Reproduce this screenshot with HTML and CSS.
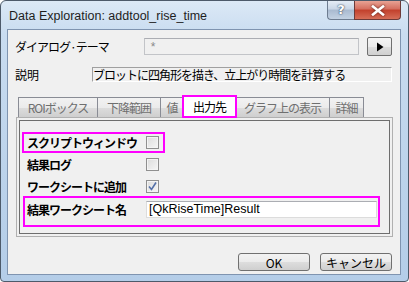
FILE: index.html
```html
<!DOCTYPE html>
<html lang="ja">
<head>
    <meta charset="UTF-8">
    <title>Data Exploration: addtool_rise_time</title>
    <link rel="stylesheet" href="styles.css">
</head>
<body>
    <!-- Janela do diálogo -->
    <div class="window">
        <div class="titlebar">
            <span class="title">Data Exploration: addtool_rise_time</span>
            <div class="caption-buttons">
                <span class="cap-help">?</span>
                <span class="cap-close">
                    <svg width="14" height="11" viewBox="0 0 14 11"><path d="M2 1.5 L12 9.5 M12 1.5 L2 9.5" stroke="#fff" stroke-width="2.6" stroke-linecap="square"/></svg>
                </span>
            </div>
        </div>

        <div class="client">
            <!-- Tema -->
            <div class="theme-row">
                <span class="row-label">ダイアログ·テーマ</span>
                <div class="theme-field">*</div>
                <button class="arrow-btn">
                    <svg width="8" height="10" viewBox="0 0 8 10"><path d="M1 0.5 L7.5 5 L1 9.5 Z" fill="#000"/></svg>
                </button>
            </div>

            <!-- Descrição -->
            <div class="desc-row">
                <span class="desc-label">説明</span>
                <div class="desc-field">ブロットに四角形を描き、立上がり時間を計算する</div>
            </div>

            <!-- Abas -->
            <div class="tabs">
                <div class="tab">ROIボックス</div>
                <div class="tab">下降範囲</div>
                <div class="tab">値</div>
                <div class="tab active">出力先</div>
                <div class="tab">グラフ上の表示</div>
                <div class="tab">詳細</div>
            </div>

            <div class="panel">
                <div class="panel-inner">
                    <div class="opt-row boxed">
                        <span class="opt-label">スクリプトウィンドウ</span>
                        <span class="check"></span>
                    </div>
                    <div class="opt-row">
                        <span class="opt-label">結果ログ</span>
                        <span class="check"></span>
                    </div>
                    <div class="opt-row">
                        <span class="opt-label">ワークシートに追加</span>
                        <span class="check checked">
                            <svg width="11" height="11" viewBox="0 0 11 11"><path d="M2 5.5 L4.5 8.5 L9 1.5" fill="none" stroke="#5470a8" stroke-width="1.6"/></svg>
                        </span>
                    </div>
                    <div class="sheet-row">
                        <span class="opt-label">結果ワークシート名</span>
                        <div class="sheet-input">[QkRiseTime]Result</div>
                    </div>
                </div>
            </div>

            <!-- Botões -->
            <div class="footer">
                <button class="dlg-btn">OK</button>
                <button class="dlg-btn">キャンセル</button>
            </div>
        </div>
    </div>
</body>
</html>
```

FILE: styles.css
```css
/* Reset */
* {
    margin: 0;
    padding: 0;
    box-sizing: border-box;
}

body {
    width: 409px;
    height: 282px;
    overflow: hidden;
    background: #ffffff;
    font-family: "Noto Sans CJK JP", "Liberation Sans", sans-serif;
    font-size: 12px;
    color: #000;
}

/* Moldura da janela */
.window {
    width: 409px;
    height: 282px;
    border: 1px solid #4d5a6a;
    border-radius: 6px 6px 4px 4px;
    background: linear-gradient(180deg, #dce9f6 0%, #c9dcf0 12%, #bcd3eb 60%, #b4cde8 100%);
    padding: 0 7px 6px 6px;
    display: flex;
    flex-direction: column;
}

.titlebar {
    height: 28px;
    display: flex;
    justify-content: space-between;
    align-items: flex-start;
}

.title {
    font-family: "Liberation Sans", sans-serif;
    font-size: 12.5px;
    color: #1e1e1e;
    margin: 8px 0 0 2px;
}

.caption-buttons {
    display: flex;
    height: 19px;
}

.cap-help {
    width: 27px;
    height: 19px;
    border: 1px solid #6d7c90;
    border-top: none;
    border-right: none;
    border-radius: 0 0 0 4px;
    background: linear-gradient(180deg, #e4ecf5 0%, #c9d6e6 45%, #a9bad0 50%, #c3d2e3 100%);
    color: #fff;
    font-family: "DejaVu Sans", sans-serif;
    font-weight: bold;
    font-size: 13px;
    text-align: center;
    line-height: 18px;
    text-shadow: 0 0 2px #35475e, 0 0 1px #35475e;
}

.cap-close {
    width: 47px;
    height: 19px;
    border: 1px solid #6d3a38;
    border-top: none;
    border-radius: 0 0 4px 0;
    background: linear-gradient(180deg, #e8a294 0%, #d46e5e 45%, #c2402c 50%, #d66e58 100%);
    display: flex;
    justify-content: center;
    align-items: center;
}

.cap-close svg {
    filter: drop-shadow(0 0 1px #5a1a12);
}

/* Área cliente */
.client {
    width: 394px;
    height: 246px;
    border: 1px solid #7f94b0;
    background: #f0f0f0;
    padding: 0 8px 0 0;
}

.theme-row {
    display: flex;
    align-items: center;
    height: 19px;
    margin-top: 7px;
    padding-left: 7px;
}

.row-label {
    width: 129px;
    letter-spacing: -1px;
}

.theme-field {
    width: 216px;
    height: 17px;
    border: 1px solid #c2c4c8;
    border-top-color: #abadb3;
    background: #f0f0f0;
    color: #8a8a8a;
    font-family: "Liberation Sans", sans-serif;
    padding-left: 6px;
    line-height: 16px;
}

.arrow-btn {
    width: 25px;
    height: 19px;
    margin-left: 8px;
    border: 1px solid #707070;
    border-radius: 2px;
    background: linear-gradient(180deg, #f4f4f4 0%, #ebebeb 50%, #dddddd 51%, #d0d0d0 100%);
    display: flex;
    justify-content: center;
    align-items: center;
}

.desc-row {
    display: flex;
    align-items: center;
    height: 14px;
    margin-top: 11px;
    padding-left: 7px;
}

.desc-label {
    width: 77px;
}

.desc-field {
    flex: 1;
    height: 15px;
    border: 1px solid #fff;
    border-top-color: #a0a0a0;
    border-left-color: #a0a0a0;
    line-height: 13px;
    letter-spacing: -1px;
    white-space: nowrap;
}

/* Abas */
.tabs {
    display: flex;
    align-items: flex-end;
    height: 21px;
    margin-top: 15px;
    padding-left: 10px;
}

.tab {
    height: 20px;
    border: 1px solid #898c95;
    border-bottom: none;
    margin-right: -1px;
    background: linear-gradient(180deg, #f2f2f2 0%, #ebebeb 50%, #dddddd 51%, #cfcfcf 100%);
    color: #6f6f6f;
    font-size: 12px;
    letter-spacing: -1px;
    text-align: center;
    line-height: 19px;
}

.tab:nth-child(1) { width: 80px; }
.tab:nth-child(2) { width: 64px; }
.tab:nth-child(3) { width: 24px; }
.tab:nth-child(4) { width: 53px; }
.tab:nth-child(5) { width: 95px; }
.tab:nth-child(6) { width: 35px; }

.tab.active {
    height: 21px;
    background: #ffffff;
    color: #000;
    outline: 2px solid #ff00ff;
    outline-offset: -1px;
    position: relative;
    z-index: 1;
}

/* Painel da aba */
.panel {
    margin-left: 8px;
    width: 377px;
    height: 120px;
    border: 1px solid #b0b0b0;
    padding: 2px;
}

.panel-inner {
    height: 114px;
    border: 1px solid #6e6e6e;
    padding-top: 13px;
}

.opt-row {
    display: flex;
    align-items: center;
    height: 17px;
    width: 139px;
    margin: 5px 0 0 4px;
    padding-left: 3px;
}

.opt-row.boxed {
    margin-top: 0;
    outline: 2px solid #ff00ff;
}

.opt-label {
    width: 119px;
    font-weight: bold;
    letter-spacing: -1px;
    white-space: nowrap;
}

.check {
    width: 13px;
    height: 13px;
    border: 1px solid #8f8f8f;
    background: linear-gradient(135deg, #dcdcdc 0%, #f6f6f6 100%);
    box-shadow: inset 0 0 0 1px #f4f4f4;
    display: flex;
    justify-content: center;
    align-items: center;
}

.sheet-row {
    display: flex;
    align-items: center;
    width: 353px;
    height: 27px;
    margin: 3px 0 0 5px;
    padding: 3px 1px 7px 2px;
    outline: 2px solid #ff00ff;
}

.sheet-input {
    width: 231px;
    height: 17px;
    border: 1px solid #dcdcdc;
    border-top-color: #abadb3;
    background: #ffffff;
    font-family: "Liberation Sans", sans-serif;
    font-size: 12.5px;
    line-height: 15px;
    padding-left: 2px;
}

/* Rodapé */
.footer {
    display: flex;
    justify-content: flex-end;
    gap: 10px;
    margin-top: 16px;
}

.dlg-btn {
    width: 72px;
    height: 18px;
    border: 1px solid #707070;
    border-radius: 3px;
    background: linear-gradient(180deg, #f2f2f2 0%, #ebebeb 50%, #dddddd 51%, #cfcfcf 100%);
    font-family: "Noto Sans CJK JP", "Liberation Sans", sans-serif;
    font-size: 12px;
    line-height: 15px;
    color: #000;
}
```
